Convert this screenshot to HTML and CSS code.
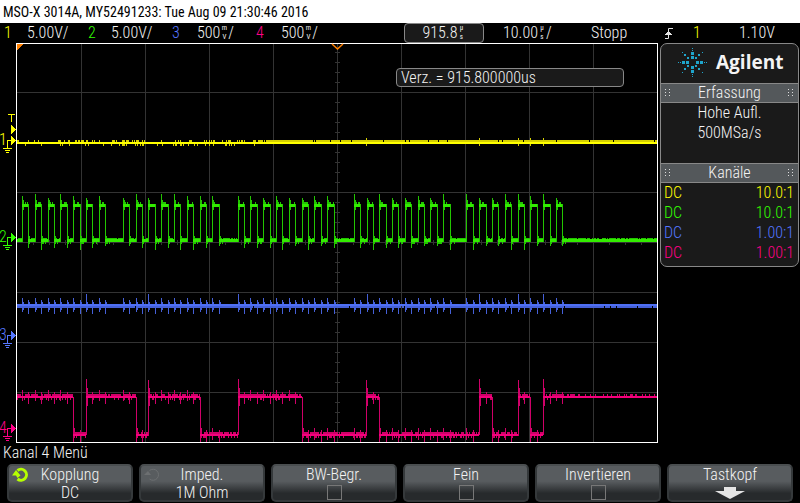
FILE: index.html
```html
<!DOCTYPE html>
<html lang="de">
<head>
<meta charset="utf-8">
<title>MSO-X 3014A</title>
<link rel="stylesheet" href="styles.css">
</head>
<body>
<header class="title">MSO-X 3014A, MY52491233: Tue Aug 09 21:30:46 2016</header>
<div class="status">
  <span class="ch1">1</span><span>5.00V/</span>
  <span class="ch2">2</span><span>5.00V/</span>
  <span class="ch3">3</span><span>500<span class="unit"><span>m</span><span>V</span></span>/</span>
  <span class="ch4">4</span><span>500<span class="unit"><span>m</span><span>V</span></span>/</span>
  <span class="delay">915.8<span class="unit"><span>µ</span><span>s</span></span></span>
  <span class="timebase">10.00<span class="unit"><span>µ</span><span>s</span></span>/</span>
  <span>Stopp</span>
  <svg class="edge" viewBox="0 0 10 13" aria-hidden="true"><path d="M1 11.500H4.500V1.500H9M1 7.500H8M2 6.500H7M3 5.500H6" /></svg>
  <span class="ch1">1</span>
  <span class="level">1.10V</span>
</div>
<main class="main">
  <section class="scope">
    <svg id="plot" class="plot" viewBox="0 43 660 400" shape-rendering="crispEdges">
      <g id="grid" fill="#333"></g>
      <g id="waves"></g>
      <path fill="#fff" d="M16 43H658V443H16ZM17 44V442H657V44Z" fill-rule="evenodd"/>
      <path fill="#ff8000" d="M17 44H23L17 50Z"/>
      <path fill="none" stroke="#ff8000" stroke-width="1.500" shape-rendering="auto" d="M332 44L337.500 49L343 44"/>
      <path fill="#ff0" d="M8 114H15V115H12V122H11V115H8ZM11 125L16 129.500L11 134Z"/>
      <g id="markers"></g>
    </svg>
    <div class="readout">Verz. = 915.800000us</div>
  </section>
  <aside class="panel">
    <div class="brand">
      <svg id="spark" class="spark" viewBox="-15 -15 30 30" shape-rendering="crispEdges" aria-hidden="true"></svg>
      <span>Agilent</span>
    </div>
    <h2 class="bar">Erfassung</h2>
    <div class="acq"><div>Hohe Aufl.</div><div>500MSa/s</div></div>
    <h2 class="bar">Kanäle</h2>
    <div class="channels">
      <div class="ch1"><span>DC</span><span>10.0:1</span></div>
      <div class="ch2"><span>DC</span><span>10.0:1</span></div>
      <div class="ch3"><span>DC</span><span>1.00:1</span></div>
      <div class="ch4"><span>DC</span><span>1.00:1</span></div>
    </div>
  </aside>
</main>
<div class="menu-title">Kanal 4 Menü</div>
<nav class="keys">
  <button class="key"><svg class="knob" viewBox="0 0 18 16" aria-hidden="true"><path d="M5.500 3.500A5.500 5.500 0 1 1 5.500 12" /><path class="tip" d="M0 8.500L4 3L8.500 8.500L5.500 11L4 8.500Z"/></svg><span>Kopplung</span><span>DC</span></button>
  <button class="key"><svg class="knob off" viewBox="0 0 18 16" aria-hidden="true"><path d="M5.500 3.500A5.500 5.500 0 1 1 5.500 12" /><path class="tip" d="M0 8L4 4L7 8Z"/></svg><span>Imped.</span><span>1M Ohm</span></button>
  <label class="key"><span>BW-Begr.</span><input type="checkbox"></label>
  <label class="key"><span>Fein</span><input type="checkbox"></label>
  <label class="key"><span>Invertieren</span><input type="checkbox"></label>
  <button class="key"><span>Tastkopf</span><svg class="down" viewBox="0 0 30 12" aria-hidden="true"><path d="M9 0H21V4H30L15 12L0 4H9Z"/></svg></button>
</nav>
<script src="plot.js"></script>
</body>
</html>
```
FILE: styles.css
```css
* { box-sizing: border-box; }
body {
  margin: 0;
  background: #000;
  color: #f4f4f4;
  font: 300 16px/20px "Roboto Condensed", "Liberation Sans Narrow", "Liberation Sans", sans-serif;
}
.ch1 { color: #ff0; }
.ch2 { color: #3f0; }
.ch3 { color: #57f; }
.ch4 { color: #f08; }

.title {
  padding: 2px 3px 1px;
  background: #fff;
  color: #000;
  font-size: 14px;
  font-weight: 400;
}
.status {
  display: grid;
  grid-template-columns: 23fr 61fr 23fr 61fr 25fr 59fr 25fr 123fr 99fr 88fr 73fr 29fr 46fr 61fr;
  align-items: center;
  height: 20px;
  padding-left: 4px;
  line-height: 18px;
  white-space: nowrap;
}
.unit {
  display: inline-flex;
  flex-direction: column;
  align-items: center;
  width: 8px;
  font-size: 7px;
  font-weight: 400;
  line-height: 9px;
  vertical-align: top;
}
.unit span { height: 9px; }
.delay {
  height: 20px;
  margin-right: 19px;
  border: 1px solid #888;
  border-radius: 4px;
  background: #1a1a1a;
  line-height: 18px;
  text-align: center;
}
.edge {
  width: 10px;
  height: 13px;
  fill: none;
  stroke: #e4e4e4;
}

.main {
  display: grid;
  grid-template-columns: 660fr 140fr;
  align-items: start;
}
.scope { position: relative; }
.plot {
  display: block;
  width: 100%;
}
.plot text { font-size: 16px; }
.readout {
  position: absolute;
  top: 25px;
  left: 60%;
  width: 228px;
  padding-left: 4px;
  border: 1px solid #888;
  border-radius: 4px;
  background: #1a1a1a;
  line-height: 17px;
}

.panel {
  margin-right: 1px;
  padding-bottom: 3px;
  border: 1px solid #888;
  border-radius: 7px;
  background: #1a1a1a;
}
.brand {
  display: flex;
  align-items: center;
  gap: 9px;
  height: 39px;
  padding: 0 0 3px 16px;
  font: bold 19px/24px "Open Sans", sans-serif;
}
.spark {
  width: 30px;
  height: 30px;
}
.bar {
  display: flex;
  justify-content: space-between;
  align-items: center;
  margin: 0;
  padding: 0 4px;
  border: solid #888;
  border-width: 1px 0;
  background: #54585b;
  font: inherit;
  line-height: 18px;
}
.bar::before, .bar::after {
  content: "";
  width: 6px;
  height: 8px;
  background: conic-gradient(from 270deg at 1px 1px, #ddd 90deg, transparent 0) 0 0 / 4px 3px;
}
.acq {
  height: 60px;
  text-align: center;
}
.channels > div {
  display: flex;
  justify-content: space-between;
  padding: 0 4px 0 3px;
}

.menu-title {
  padding: 0 3px 1px;
}
.keys {
  display: grid;
  grid-template-columns: repeat(6, 1fr);
  gap: 6px;
  padding: 0 7px;
}
.key {
  position: relative;
  display: flex;
  flex-direction: column;
  align-items: center;
  height: 38px;
  padding: 0;
  border: 2px solid #35393b;
  border-top-color: #4a4e50;
  border-radius: 5px;
  background: linear-gradient(#585c5f 0 45%, #272a2c 80%);
  color: inherit;
  font: inherit;
  line-height: 18px;
}
.key input {
  width: 15px;
  height: 15px;
  margin: 1px 0 0;
  appearance: none;
  border: 1px solid #777;
}
.knob {
  position: absolute;
  top: 1px;
  left: 3px;
  width: 18px;
  height: 16px;
  fill: none;
  stroke: #b6ff00;
  stroke-width: 3;
}
.knob .tip {
  fill: #b6ff00;
  stroke: none;
}
.knob.off {
  stroke: #6c6f71;
  stroke-width: 1;
}
.knob.off .tip { fill: #6c6f71; }
.down {
  width: 30px;
  height: 12px;
  margin-top: 3px;
  fill: #e4e4e4;
}
```
FILE: plot.js
```js
const NS = 'http://www.w3.org/2000/svg';
const path = (id, fill, d) => {
  const p = document.createElementNS(NS, 'path');
  p.setAttribute('fill', fill);
  p.setAttribute('d', d);
  document.getElementById(id).append(p);
};
const box = (x, y, w, h) => `M${x} ${y}h${w}v${h}h${-w}z`;

let seed = 7;
const rnd = () => (seed = (seed * 16807) % 2147483647) / 2147483647;

// graticule
let g = '';
for (let x = 81; x < 650; x += 64) g += box(x, 44, 1, 398);
for (let y = 92; y < 440; y += 50) g += box(17, y, 640, 1);
for (let y = 52; y < 440; y += 10) g += box(335, y, 5, 1);
for (let x = 33; x < 650; x += 16) g += box(x, 240, 1, 5);
path('grid', '#333', g);

// channel 1
let dim = '';
for (let x = 17; x < 657; x++) {
  const dense = x > 265 ? 0.95 : x > 235 ? 0.6 : 0.3;
  if (rnd() < dense) dim += box(x, 140, 1, 2);
  if (x < 265 && rnd() < 0.15) dim += box(x, 144, 1, 2);
}
[366, 479, 518, 530, 543].forEach(x => { dim += box(x, 138, 1, 8); });
path('waves', '#d6d000', dim);
path('waves', '#ff0', box(17, 142, 640, 2));

// channel 2: pulse edges as [rise, fall]
const pulses = [
  [22, 28], [35, 41], [48, 54], [60, 67], [73, 80], [86, 92], [99, 105],
  [123, 129], [136, 142], [148, 155], [161, 168], [174, 180], [187, 193], [200, 206], [212, 219],
  [238, 244], [250, 257], [263, 270], [276, 282], [289, 295], [302, 308], [314, 321], [327, 334],
  [354, 360], [367, 373], [379, 386], [392, 398], [405, 411], [418, 424], [430, 437], [443, 450],
  [466, 473], [479, 486], [492, 498], [505, 511], [518, 524], [530, 537], [543, 550], [556, 562]
];
let line = '';
dim = '';
let at = 17;
const low = (a, b) => {
  line += box(a, 239, b - a, 3);
  for (let x = a; x < b; x++) if (rnd() < 0.85) dim += box(x, 238, 1, 1);
  for (let x = a; x < Math.min(b, a + 5); x++) if (rnd() < 0.3) dim += box(x, 242, 1, 2);
};
pulses.forEach(([up, down]) => {
  low(at, up);
  const top = 194 + Math.floor(rnd() * 3) * 2;
  const bottom = 246 + Math.floor(rnd() * 3) * 2;
  dim += box(up, top, 1, 242 - top) + box(up + 1, 200, 1, 10);
  dim += box(down, 204, 1, bottom - 204) + box(down + 1, 236, 1, 8);
  for (let x = up + 2; x < down; x++) if (rnd() < 0.45) dim += box(x, 202, 1, 2);
  line += box(up, 204, down - up, 3);
  at = down;
});
low(at, 657);
path('waves', '#22c600', dim);
path('waves', '#33ec00', line);

// channel 3: crosstalk on every edge of channel 2
const strong = [86, 148, 238, 367, 479, 518, 543];
dim = '';
pulses.forEach(([up, down]) => {
  const top = strong.includes(up) ? 294 : 298;
  dim += box(up, top, 1, 312 - top) + box(up + 1, 302, 1, 8);
  dim += box(down, 300, 1, 14) + box(down + 1, 302, 1, 6);
});
for (let x = 17; x < 657; x++) if (rnd() < 0.96) dim += box(x, 306, 1, 2);
path('waves', '#4560d8', dim);
path('waves', '#4f70f4', box(17, 304, 640, 2));

// channel 4: level changes, starting high
const steps = [17, 73, 86, 136, 148, 200, 238, 302, 366, 379, 479, 492, 518, 530, 543, 657];
line = '';
dim = '';
for (let i = 0; i < steps.length - 1; i++) {
  const [a, b] = [steps[i], steps[i + 1]];
  const high = i % 2 === 0;
  const y = high ? 396 : 434;
  line += box(a, y, b - a, 2);
  for (let x = a; x < b; x++) {
    if (rnd() < (x > 575 ? 0.25 : 0.8)) dim += box(x, y - 2, 1, 2);
    if (x < 565 && rnd() < 0.22) dim += box(x, y + 2, 1, 2);
  }
  if (high && i) dim += box(a, i % 4 ? 379 : 380, 1, 56) + box(a + 1, 388, 1, 18);
  if (!high) dim += box(a, 397, 1, 45) + box(a + 1, 428, 1, 10);
}
const isHigh = x => steps.findIndex(s => s > x) % 2 === 1;
pulses.forEach(([up, down]) => {
  dim += isHigh(up) ? box(up, 390, 1, 11) : box(up, 428, 1, 12);
  dim += isHigh(down) ? box(down, 392, 1, 12) : box(down, 430, 1, 12);
});
path('waves', '#cf0068', dim);
path('waves', '#f5007c', line);

// ground markers
[[1, 140, '#ff0'], [2, 237, '#3f0'], [3, 335, '#57f'], [4, 428, '#f08']].forEach(([n, y, color]) => {
  path('markers', color,
    `M11 ${y - 5}L16 ${y + 0.5}L11 ${y + 6}z` + box(7, y, 5, 1) + box(7, y, 1, 8) +
    box(3, y + 8, 9, 1) + box(5, y + 10, 5, 1) + box(6, y + 12, 3, 1));
  const t = document.createElementNS(NS, 'text');
  t.setAttribute('x', -1);
  t.setAttribute('y', y + 5);
  t.setAttribute('fill', color);
  t.textContent = n;
  document.getElementById('markers').append(t);
});

// brand spark: [distance, dot size] along straight and diagonal rays
let rays = '';
const straight = [[5, 3], [9, 3], [12, 1], [14, 1]];
const diagonal = [[4, 2], [7, 2], [10, 1]];
for (const [dx, dy] of [[1, 0], [-1, 0], [0, 1], [0, -1], [1, 1], [1, -1], [-1, 1], [-1, -1]]) {
  for (const [r, s] of dx && dy ? diagonal : straight) {
    const half = Math.floor(s / 2);
    rays += box(r * dx - half, r * dy - half, s, s);
  }
}
path('spark', '#1fa5cc', rays);
```
